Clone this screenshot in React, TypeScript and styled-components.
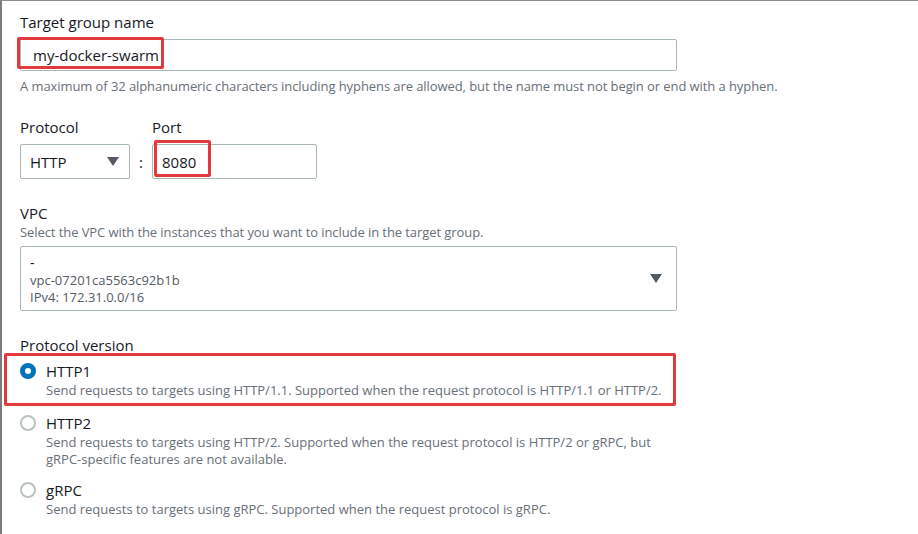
import React from "react";
import styled, { createGlobalStyle } from "styled-components";

const Global = createGlobalStyle`
  html, body { margin: 0; padding: 0; background: #ffffff; }
  body { font-family: "Open Sans", "Noto Sans", Arial, sans-serif; color: #16191f; }
  * { box-sizing: border-box; }
`;

const Frame = styled.div`
  width: 918px;
  height: 534px;
  border-top: 1px solid #8a8a8a;
  border-left: 2px solid #7c7c7c;
  padding: 10px 0 0 18px;
  overflow: hidden;
`;

const Form = styled.div`
  width: 657px;
  display: flex;
  flex-direction: column;
`;

const Field = styled.div<{ $mt?: number }>`
  display: flex;
  flex-direction: column;
  margin-top: ${(p) => p.$mt ?? 0}px;
`;

const Label = styled.div`
  font-size: 15px;
  line-height: 22px;
  color: #16191f;
`;

const Help = styled.div<{ $mt?: number }>`
  font-size: 13px;
  line-height: 16px;
  color: #687078;
  white-space: nowrap;
  letter-spacing: -0.08px;
  margin-top: ${(p) => p.$mt ?? 0}px;
`;

const TextInput = styled.div<{ $h: number }>`
  position: relative;
  height: ${(p) => p.$h}px;
  width: 100%;
  border: 1px solid #aab7b8;
  border-radius: 2px;
  display: flex;
  align-items: center;
  font-size: 15px;
  color: #16191f;
  background: #fff;
`;

const Annotation = styled.div<{ $l: number; $t: number; $w: number; $h: number }>`
  position: absolute;
  left: ${(p) => p.$l}px;
  top: ${(p) => p.$t}px;
  width: ${(p) => p.$w}px;
  height: ${(p) => p.$h}px;
  border: 3px solid #e2393f;
  border-radius: 2px;
  pointer-events: none;
`;

const Value = styled.span<{ $pl: number }>`
  padding-left: ${(p) => p.$pl}px;
`;

const Row = styled.div`
  display: flex;
  align-items: flex-start;
`;

const Col = styled.div<{ $w: number }>`
  display: flex;
  flex-direction: column;
  width: ${(p) => p.$w}px;
`;

const Colon = styled.div`
  width: 22px;
  height: 35px;
  display: flex;
  align-items: center;
  justify-content: center;
  font-size: 15px;
  color: #16191f;
`;

const SelectBox = styled.div<{ $h: number; $pr: number }>`
  height: ${(p) => p.$h}px;
  border: 1px solid #aab7b8;
  border-radius: 2px;
  display: flex;
  align-items: center;
  justify-content: space-between;
  padding: 0 ${(p) => p.$pr}px 0 9px;
  font-size: 15px;
  color: #16191f;
`;

const Caret = () => (
  <svg width="12" height="9" viewBox="0 0 12 9">
    <path d="M0 0 L12 0 L6 9 Z" fill="#545b64" />
  </svg>
);

const VpcLines = styled.div`
  display: flex;
  flex-direction: column;
  padding-top: 3px;
`;

const VpcMain = styled.div`
  font-size: 14px;
  line-height: 18px;
  color: #16191f;
`;

const VpcSub = styled.div`
  font-size: 13px;
  line-height: 17px;
  color: #545b64;
`;

const RadioGroup = styled.div`
  display: flex;
  flex-direction: column;
  margin-top: 4px;
`;

const RadioItem = styled.div<{ $mt: number }>`
  position: relative;
  display: grid;
  grid-template-columns: 16px 1fr;
  column-gap: 10px;
  margin-top: ${(p) => p.$mt}px;
`;

const RadioDot = styled.span<{ $checked?: boolean }>`
  width: 16px;
  height: 16px;
  margin-top: 3px;
  border-radius: 50%;
  ${(p) =>
    p.$checked
      ? `background: #0073bb; border: 4px solid #0073bb;`
      : `background: #fff; border: 2px solid #b9c2c4;`}
  display: flex;
  align-items: center;
  justify-content: center;
  &::after {
    content: "";
    display: ${(p) => (p.$checked ? "block" : "none")};
    width: 6px;
    height: 6px;
    border-radius: 50%;
    background: #fff;
  }
`;

const RadioText = styled.div`
  display: flex;
  flex-direction: column;
`;

const RadioLabel = styled.div`
  font-size: 15px;
  line-height: 22px;
  color: #16191f;
`;

const RadioDesc = styled.div`
  font-size: 13px;
  line-height: 17px;
  color: #687078;
  max-width: 625px;
`;

export default function App() {
  return (
    <>
      <Global />
      <Frame>
        <Form>
          <Field>
            <Label>Target group name</Label>
            <TextInput $h={32} style={{ marginTop: 6 }}>
              <Value $pl={12}>my-docker-swarm</Value>
              <Annotation $l={-4} $t={-3} $w={147} $h={32} />
            </TextInput>
            <Help $mt={7}>
              A maximum of 32 alphanumeric characters including hyphens are allowed, but the name must not begin or end with a hyphen.
            </Help>
          </Field>

          <Row style={{ marginTop: 22 }}>
            <Col $w={110}>
              <Label>Protocol</Label>
              <SelectBox $h={35} $pr={10} style={{ marginTop: 6 }}>
                <span>HTTP</span>
                <Caret />
              </SelectBox>
            </Col>
            <Col $w={22}>
              <Label>&nbsp;</Label>
              <Colon style={{ marginTop: 6 }}>:</Colon>
            </Col>
            <Col $w={165}>
              <Label>Port</Label>
              <TextInput $h={35} style={{ marginTop: 6 }}>
                <Value $pl={9}>8080</Value>
                <Annotation $l={1} $t={-5} $w={57} $h={37} />
              </TextInput>
            </Col>
          </Row>

          <Field $mt={23}>
            <Label>VPC</Label>
            <Help>Select the VPC with the instances that you want to include in the target group.</Help>
            <SelectBox $h={65} $pr={14} style={{ marginTop: 6 }}>
              <VpcLines>
                <VpcMain>-</VpcMain>
                <VpcSub>vpc-07201ca5563c92b1b</VpcSub>
                <VpcSub>IPv4: 172.31.0.0/16</VpcSub>
              </VpcLines>
              <Caret />
            </SelectBox>
          </Field>

          <Field $mt={23}>
            <Label>Protocol version</Label>
            <RadioGroup>
              <RadioItem $mt={0}>
                <RadioDot $checked />
                <RadioText>
                  <RadioLabel>HTTP1</RadioLabel>
                  <RadioDesc>
                    Send requests to targets using HTTP/1.1. Supported when the request protocol is HTTP/1.1 or HTTP/2.
                  </RadioDesc>
                </RadioText>
                <Annotation $l={-16} $t={-7} $w={672} $h={53} />
              </RadioItem>
              <RadioItem $mt={13}>
                <RadioDot />
                <RadioText>
                  <RadioLabel>HTTP2</RadioLabel>
                  <RadioDesc>
                    Send requests to targets using HTTP/2. Supported when the request protocol is HTTP/2 or gRPC, but gRPC-specific features are not available.
                  </RadioDesc>
                </RadioText>
              </RadioItem>
              <RadioItem $mt={11}>
                <RadioDot />
                <RadioText>
                  <RadioLabel>gRPC</RadioLabel>
                  <RadioDesc>
                    Send requests to targets using gRPC. Supported when the request protocol is gRPC.
                  </RadioDesc>
                </RadioText>
              </RadioItem>
            </RadioGroup>
          </Field>
        </Form>
      </Frame>
    </>
  );
}
